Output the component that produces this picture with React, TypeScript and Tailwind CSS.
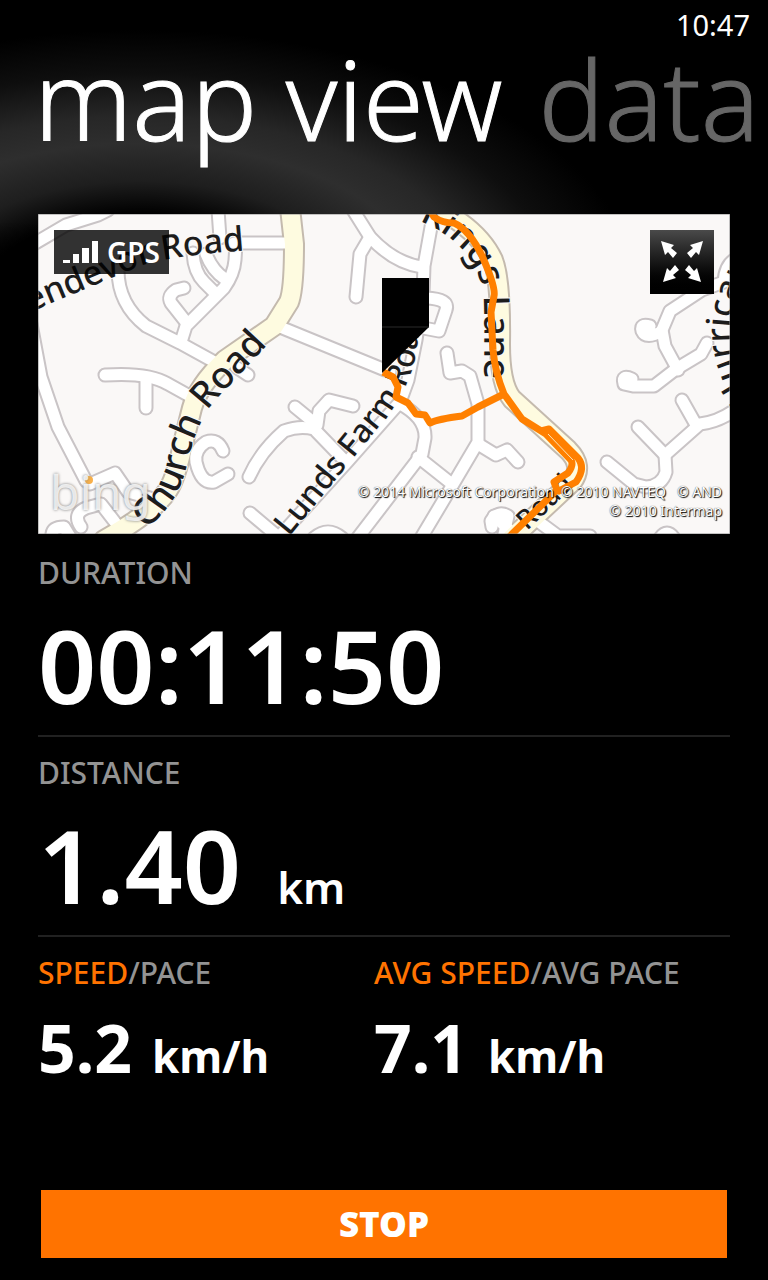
import { type ReactNode } from 'react'

const STREETS = [
  'M-6 31 L28 11 L60 1 L70 -4',
  'M180 -4 L182 24',
  'M196 29 L256 29',
  'M198 30 L197 46 Q196 60 186 74 L148 112 L143 128',
  'M155 39 Q156 58 166 68 L177 79',
  'M168 40 Q174 56 187 65',
  'M146 74 L138 76 Q129 82 133 89 L148 108',
  'M80 56 Q80 90 108 112 L142 129 L182 151',
  'M198 153 L210 161',
  'M-7 110 L3 163 L20 213 L48 267',
  'M67 161 Q110 158 130 170 L157 185',
  'M108 163 L108 194',
  'M185 237 Q180 224 168 228 Q156 236 158 248 Q163 270 176 268 L190 260',
  'M211 263 Q222 238 246 217 Q262 211 276 215 L306 246',
  'M257 193 L279 211 L281 197 L291 186 L315 192',
  'M212 299 L244 326',
  'M52 270 L77 259 L90 278 L112 284',
  'M43 313 Q34 300 48 294 L63 290 L80 312',
  'M14 320 Q15 313 26 313 L34 326',
  'M315 -4 L332 23 Q356 49 384 53',
  'M332 23 L322 40 L318 83',
  'M395 2 L386 52 L385 80 L378 126 L370 166 L362 188 L309 248 L240 324',
  'M388 84 Q412 85 408 96 L401 117 L380 113',
  'M242 113 L352 158',
  'M409 139 L412 159 L424 157 L432 162 L440 190 L440 228 L414 272 L383 324',
  'M362 190 Q388 204 387 224 L384 240 L318 326',
  'M380 243 L414 270',
  'M440 230 L458 241 L469 236 L480 248',
  'M454 313 L453 307 Q460 296 470 302 L466 320',
  'M276 324 Q290 312 304 324',
  'M696 46 Q687 52 686 68 L664 76 L632 97 L624 116 L627 132 L640 156',
  'M624 117 Q608 126 604 117 Q602 109 612 112',
  'M669 129 L663 140 L638 155 L616 172 L595 172 L586 170 Q583 160 594 165',
  'M644 186 L657 209',
  'M697 196 Q680 208 662 210 L627 241 L600 213',
  'M627 241 L628 258 Q624 272 608 273 L596 270 L569 248',
  'M456 302 L478 322',
  'M497 305 L520 322 L552 322',
  'M622 324 Q629 314 636 324',
]

const MAIN_ROADS = [
  'M252 -6 L256 30 Q256 76 251 88 L236 112 L187 146 Q160 172 154 194 L146 226 Q138 264 130 276 Q116 298 66 326',
  'M394 -8 Q440 14 455 46 Q463 66 462 130 Q462 170 474 185 L530 236 Q546 252 534 268 L474 324',
]

const ROUTES = [
  'M392 -4 L396 3 Q404 9 416 9 Q432 16 445 44 Q458 74 456 82 L453 98 L455 136 Q457 158 466 180 L484 205 L508 220 L533 246 Q536 251 530 259 L516 268 L519 276 L470 324',
  'M503 217 L511 215 L540 244 Q548 254 538 268 L519 278',
  'M345 158 L355 163 L360 173 L358 183 L370 189 L378 200 L387 201 L392 209 Q400 205 424 202 L440 193 L464 181',
]

const LABELS = [
  { id: 'endevor', text: 'endevor Road', size: 'text-[34px]', d: 'M-8 98 Q50 74 100 53 Q130 40 260 33' },
  { id: 'church', text: 'Church Road', size: 'text-[37px]', d: 'M107 315 Q142 290 150 246 Q160 206 178 186 L260 98' },
  { id: 'lunds', text: 'Lunds Farm Road', size: 'text-[32px]', d: 'M251 323 L352 199 Q372 170 378 140 L388 60' },
  { id: 'kings', text: 'Kings Lane', size: 'text-[36px]', d: 'M381 7 Q434 28 445 76 Q447 86 446 200' },
  { id: 'hurricane', text: 'Hurricane', size: 'text-[34px]', d: 'M716 184 Q670 120 714 52 L760 0' },
  { id: 'road', text: 'Road', size: 'text-[27px]', d: 'M489 317 L550 258' },
]

function RouteMap() {
  return (
    <svg className="block w-full" viewBox="0 0 692 320" role="img" aria-label="Route map">
      <rect width="692" height="320" fill="#faf8f7" />
      <g fill="none" strokeLinecap="round" strokeLinejoin="round">
        <g stroke="#c9c4c6" strokeWidth="15">
          {STREETS.map((d) => <path key={d} d={d} />)}
        </g>
        <g stroke="#c4baae" strokeWidth="22">
          {MAIN_ROADS.map((d) => <path key={d} d={d} />)}
        </g>
        <g stroke="#ffffff" strokeWidth="11">
          {STREETS.map((d) => <path key={d} d={d} />)}
        </g>
        <g stroke="#fefbe0" strokeWidth="18">
          {MAIN_ROADS.map((d) => <path key={d} d={d} />)}
        </g>
      </g>
      <circle cx="51" cy="266" r="4" fill="#f8b04a" />
      {LABELS.map(({ id, text, size, d }) => (
        <g key={id}>
          <path id={id} d={d} fill="none" />
          <text className={`${size} font-medium`} fill="#1c1c1c" stroke="#faf8f7" strokeWidth="2" paintOrder="stroke">
            <textPath href={`#${id}`}>{text}</textPath>
          </text>
        </g>
      ))}
      <g fill="none" stroke="#ff8000" strokeWidth="7" strokeLinejoin="round">
        {ROUTES.map((d) => <path key={d} d={d} />)}
      </g>
      <path d="M510 220 L535 246" stroke="#fde6b8" strokeWidth="1" />
      <path d="M344 64 H391 V113 L344 159 Z" fill="#000" />
      <path d="M344 113 H391" stroke="#2a2a2a" />
      <rect width="692" height="320" fill="none" stroke="#8a8a8a" />
    </svg>
  )
}

function SignalIcon() {
  return (
    <svg width="36" height="24" viewBox="0 0 36 24" fill="#fff" aria-hidden="true">
      <rect x="0" y="20" width="7" height="3" />
      <rect x="10" y="14" width="6" height="9" />
      <rect x="19" y="8" width="7" height="15" />
      <rect x="29" y="1" width="6" height="22" />
    </svg>
  )
}

function ExpandIcon() {
  const arrow = 'M11 11 L24 15 L21 18 L27 23 L23 28 L18 22 L15 25 Z'
  return (
    <svg className="h-full w-full" viewBox="0 0 64 64" fill="#fff" aria-hidden="true">
      <path d={arrow} />
      <path d={arrow} transform="matrix(-1 0 0 1 64 0)" />
      <path d={arrow} transform="matrix(1 0 0 -1 2 63)" />
      <path d={arrow} transform="matrix(-1 0 0 -1 62 63)" />
    </svg>
  )
}

function Label({ children }: { children: ReactNode }) {
  return <h2 className="text-[30px] leading-10 font-medium text-[#939393]">{children}</h2>
}

function Stat({ label, value, unit }: { label: string; value: string; unit?: string }) {
  return (
    <section className="h-[200px] border-b-2 border-[#212121] pt-4">
      <Label>{label}</Label>
      <p className="flex items-baseline gap-9 text-[102px] leading-[144px] font-semibold">
        {value}
        {unit && <span className="text-[44px]">{unit}</span>}
      </p>
    </section>
  )
}

function RateStat({ active, other, value }: { active: string; other: string; value: string }) {
  return (
    <section>
      <Label>
        <span className="text-[#ff7300]">{active}</span>/{other}
      </Label>
      <p className="flex items-baseline gap-5 text-[66px] leading-[108px] font-bold">
        {value}
        <span className="text-[44px]">km/h</span>
      </p>
    </section>
  )
}

export default function App() {
  return (
    <main className="flex min-h-screen flex-col overflow-hidden bg-black bg-[linear-gradient(to_bottom,transparent_82%,#000),radial-gradient(500px_270px_at_140px_300px,#000_32%,#1e1e1e_44%,#2e2e2e_58%,#272727_68%,#0e0e0e_84%,#000)] bg-[length:100%_270px] bg-no-repeat px-[38px] pb-[22px] font-['Noto_Sans','Open_Sans',sans-serif] text-white">
      <header>
        <time className="-mr-5 block h-12 text-right text-[29px] leading-[50px]">10:47</time>
        <nav className="-ml-1 flex h-[166px] gap-9 text-[110px] leading-[100px] font-light whitespace-nowrap [-webkit-text-stroke:1px_currentColor]">
          <button type="button" className="self-start">map view</button>
          <button type="button" className="self-start text-[#666]">data</button>
        </nav>
      </header>

      <div className="relative mb-[3px]">
        <RouteMap />
        <div className="absolute top-4 left-4 flex h-11 items-center gap-2 bg-black/80 px-[9px] text-[28px] font-semibold">
          <SignalIcon />
          GPS
        </div>
        <button type="button" aria-label="Full screen map" className="absolute top-4 right-4 size-16 bg-linear-to-b from-[#4a4a4a] to-black">
          <ExpandIcon />
        </button>
        <span className="absolute bottom-3 left-3 text-[48px] leading-[60px] text-white/80 [text-shadow:0_0_3px_#777]">bing</span>
        <p className="absolute right-2 bottom-3.5 text-right text-[14px] leading-[19px] whitespace-pre text-white [text-shadow:1px_1px_1px_#000,0_0_1px_#333]">
          {'© 2014 Microsoft Corporation  © 2010 NAVTEQ   © AND\n© 2010 Intermap'}
        </p>
      </div>

      <Stat label="DURATION" value="00:11:50" />
      <Stat label="DISTANCE" value="1.40" unit="km" />
      <div className="grid grid-cols-[336px_1fr] pt-4">
        <RateStat active="SPEED" other="PACE" value="5.2" />
        <RateStat active="AVG SPEED" other="AVG PACE" value="7.1" />
      </div>

      <button type="button" className="mx-[3px] mt-auto h-[68px] bg-[#ff7300] text-[35px] font-black">
        STOP
      </button>
    </main>
  )
}
